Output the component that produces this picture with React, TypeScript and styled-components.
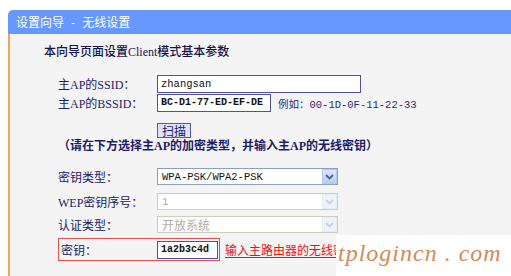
import styled, { createGlobalStyle } from "styled-components";

const GlobalStyle = createGlobalStyle`
  html, body {
    margin: 0;
    padding: 0;
    background: #ffffff;
  }
  body {
    font-family: "Liberation Serif", "Noto Sans CJK SC", serif;
    font-size: 12px;
  }
`;

const Page = styled.div`
  position: relative;
  width: 511px;
  height: 276px;
  overflow: hidden;
  padding: 10px 0 0 8px;
  box-sizing: border-box;
`;

const Header = styled.div`
  height: 24px;
  line-height: 24px;
  background: #6699ff;
  border-top-left-radius: 5px;
  color: #ffffff;
  padding-left: 8px;
  font-family: "Noto Sans CJK SC", sans-serif;
  font-size: 12px;
  white-space: pre;
`;

const Dash = styled.span`
  margin: 0 7px;
`;

const Body = styled.div`
  height: 242px;
  background: #f4f4f4;
  border-left: 2px solid #f2a65a;
  box-sizing: border-box;
  padding-top: 11px;
  display: flex;
  flex-direction: column;
`;

const Intro = styled.div`
  margin-left: 34px;
  height: 14px;
  line-height: 14px;
  color: #14144a;
  font-weight: 500;
`;

const Row = styled.div<{ $top: number; $h: number }>`
  display: flex;
  align-items: center;
  margin-top: ${(p) => p.$top}px;
  height: ${(p) => p.$h}px;
  padding-left: 48px;
`;

const Label = styled.div`
  width: 99px;
  flex-shrink: 0;
  color: #1c1c6c;
  white-space: nowrap;
`;

const TextInput = styled.div<{ $w: number; $bold?: boolean }>`
  width: ${(p) => p.$w}px;
  height: 18px;
  flex-shrink: 0;
  box-sizing: border-box;
  border: 1px solid #5050a8;
  background: #ffffff;
  font-family: "Liberation Mono", monospace;
  font-size: ${(p) => (p.$bold ? "10px" : "10.5px")};
  font-weight: ${(p) => (p.$bold ? 700 : 400)};
  line-height: 16px;
  padding-left: 3px;
  color: #111111;
  white-space: nowrap;
  overflow: hidden;
`;

const Example = styled.span`
  margin-left: 7px;
  color: #2a2a7a;
  font-family: "Liberation Mono", "Noto Sans CJK SC", monospace;
  font-size: 10.5px;
`;

const ScanButton = styled.div`
  margin-left: 99px;
  width: 34px;
  height: 15px;
  box-sizing: border-box;
  border: 1px solid #5858a8;
  background: #dfe2f6;
  color: #1c1c6c;
  font-family: "Noto Sans CJK SC", sans-serif;
  font-size: 12px;
  line-height: 13px;
  text-align: center;
`;

const Hint = styled.div`
  margin-left: 48px;
  margin-top: 1px;
  height: 14px;
  line-height: 14px;
  color: #1c1c6c;
  font-weight: 700;
  white-space: nowrap;
`;

const Select = styled.div<{ $disabled?: boolean }>`
  width: 181px;
  height: 17px;
  box-sizing: border-box;
  border: 1px solid ${(p) => (p.$disabled ? "#cfcdc2" : "#8a9fb8")};
  background: #ffffff;
  display: flex;
  align-items: center;
  justify-content: space-between;
  color: ${(p) => (p.$disabled ? "#b0ad9e" : "#111111")};
`;

const SelectText = styled.span<{ $mono?: boolean }>`
  padding-left: 4px;
  font-family: ${(p) =>
    p.$mono ? `"Liberation Mono", monospace` : `"Noto Sans CJK SC", sans-serif`};
  font-size: ${(p) => (p.$mono ? "10.5px" : "12px")};
  white-space: nowrap;
`;

const Arrow = styled.div<{ $disabled?: boolean }>`
  width: 15px;
  height: 15px;
  box-sizing: border-box;
  border: 1px solid ${(p) => (p.$disabled ? "#e4ecf8" : "#b7c8ea")};
  background: ${(p) =>
    p.$disabled ? "#eef3fb" : "linear-gradient(#dbe6fd, #b9cdf5)"};
  display: flex;
  align-items: center;
  justify-content: center;
`;

const KeyBox = styled.div`
  display: flex;
  align-items: center;
  width: 162px;
  height: 23px;
  flex-shrink: 0;
  box-sizing: border-box;
  border: 1px solid #e25050;
  padding-left: 2px;
`;

const KeyLabel = styled(Label)`
  width: 96px;
`;

const KeyNote = styled.span`
  margin-left: 5px;
  max-width: 111px;
  overflow: hidden;
  color: #ee1111;
  font-family: "Noto Sans CJK SC", sans-serif;
  font-size: 12px;
  white-space: nowrap;
  border-bottom: 1px solid #4848b0;
  line-height: 15px;
`;

const Watermark = styled.div`
  position: absolute;
  left: 336px;
  top: 235px;
  width: 175px;
  height: 41px;
  background: #ffffff;
  color: #d48a58;
  font-family: "Liberation Serif", serif;
  font-style: italic;
  font-size: 24px;
  letter-spacing: 1px;
  line-height: 36px;
  padding-left: 2px;
  box-sizing: border-box;
  white-space: pre;
`;

function Chevron({ disabled }: { disabled?: boolean }) {
  return (
    <svg width="9" height="6" viewBox="0 0 9 6">
      <path
        d="M1 1 L4.5 4.5 L8 1"
        fill="none"
        stroke={disabled ? "#c4d0e4" : "#4d6185"}
        strokeWidth="1.8"
      />
    </svg>
  );
}

export default function App() {
  return (
    <>
      <GlobalStyle />
      <Page>
        <Header>
          设置向导<Dash>-</Dash>无线设置
        </Header>
        <Body>
          <Intro>本向导页面设置Client模式基本参数</Intro>
          <Row $top={16} $h={18}>
            <Label>主AP的SSID：</Label>
            <TextInput $w={204}>zhangsan</TextInput>
          </Row>
          <Row $top={1} $h={18}>
            <Label>主AP的BSSID：</Label>
            <TextInput $w={114} $bold>BC-D1-77-ED-EF-DE</TextInput>
            <Example>例如：00-1D-0F-11-22-33</Example>
          </Row>
          <Row $top={11} $h={15}>
            <ScanButton>扫描</ScanButton>
          </Row>
          <Hint>（请在下方选择主AP的加密类型，并输入主AP的无线密钥）</Hint>
          <Row $top={15} $h={17}>
            <Label>密钥类型：</Label>
            <Select>
              <SelectText $mono>WPA-PSK/WPA2-PSK</SelectText>
              <Arrow>
                <Chevron />
              </Arrow>
            </Select>
          </Row>
          <Row $top={8} $h={17}>
            <Label>WEP密钥序号：</Label>
            <Select $disabled>
              <SelectText $mono>1</SelectText>
              <Arrow $disabled>
                <Chevron disabled />
              </Arrow>
            </Select>
          </Row>
          <Row $top={6} $h={17}>
            <Label>认证类型：</Label>
            <Select $disabled>
              <SelectText>开放系统</SelectText>
              <Arrow $disabled>
                <Chevron disabled />
              </Arrow>
            </Select>
          </Row>
          <Row $top={5} $h={23}>
            <KeyBox>
              <KeyLabel>密钥：</KeyLabel>
              <TextInput $w={61} $bold>1a2b3c4d</TextInput>
            </KeyBox>
            <KeyNote>输入主路由器的无线密钥</KeyNote>
          </Row>
        </Body>
        <Watermark>{"tplogincn . com"}</Watermark>
      </Page>
    </>
  );
}
